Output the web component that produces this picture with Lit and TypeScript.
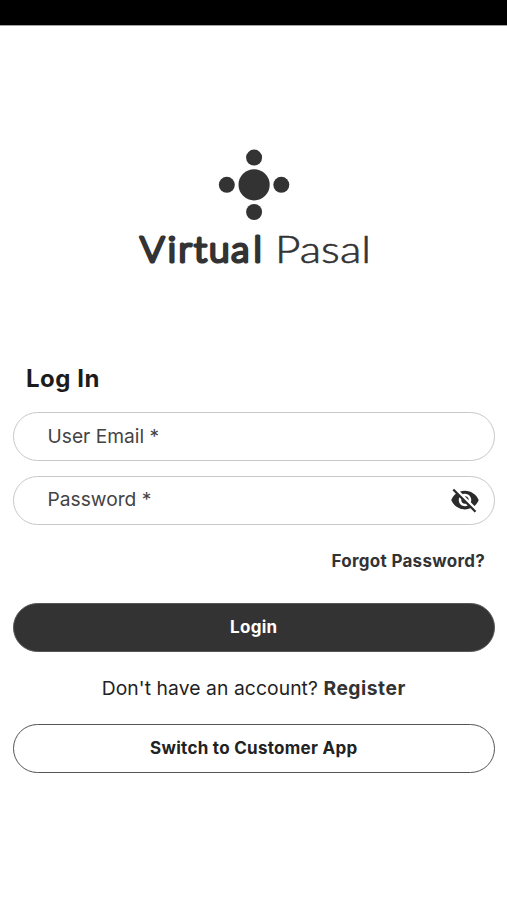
import { LitElement, html, css } from "lit";
import { customElement } from "lit/decorators.js";

@customElement("app-logo")
class AppLogo extends LitElement {
  static styles = css`
    :host { display: block; height: 130px; }
    svg { display: block; }
    .mark { fill: #333; }
    .word { font-family: Lato, sans-serif; fill: #333; stroke: #333; stroke-linejoin: round; }
    .bold { font-size: 34.6px; font-weight: 300; stroke-width: 3.1px; }
    .light { font-size: 37.2px; font-weight: 300; stroke-width: 0.6px; }
  `;
  render() {
    return html`<svg width="240" height="130" viewBox="134 145 240 130" role="img" aria-label="Virtual Pasal">
      <g class="mark">
        <circle cx="254.1" cy="184.8" r="15.6" />
        <circle cx="254.1" cy="157.6" r="8" />
        <circle cx="254.1" cy="212" r="8" />
        <circle cx="226.8" cy="184.8" r="8" />
        <circle cx="281.3" cy="184.8" r="8" />
      </g>
      <text class="word bold" transform="translate(140 261.8) scale(1.08 1)" y="0" x="0 25.6 35.7 50 64 84.6 105.2">Virtual</text>
      <text class="word light" y="263" x="275" textLength="96" lengthAdjust="spacingAndGlyphs">Pasal</text>
    </svg>`;
  }
}

@customElement("app-root")
class AppRoot extends LitElement {
  static styles = css`
    :host {
      display: flex; flex-direction: column; box-sizing: border-box; height: 900px;
      background: #fff; color: #222; font-family: Inter, "Liberation Sans", sans-serif;
    }
    * { box-sizing: border-box; }
    .status { height: 26px; background: #000; border-bottom: 1px solid #a3a3a3; }
    .logo { align-self: center; margin-top: 119px; margin-left: 1px; }
    main { display: flex; flex-direction: column; padding: 0 12.5px 0 13px; margin-top: 85px; }
    h1 { margin: 0 0 0 13px; height: 52px; line-height: 37px; font-size: 24px; font-weight: 650; letter-spacing: 0.5px; color: #1c1c1c; }
    .field {
      display: flex; align-items: center; justify-content: space-between; height: 49px;
      border: 1.3px solid #c8c8c8; border-radius: 25px; padding: 0 14px 2px 33.5px;
      font-size: 19.2px; letter-spacing: 0; color: #444;
    }
    .field + .field { margin-top: 14.5px; }
    .eye { width: 30px; height: 30px; fill: #2b2b2b; margin-top: 2px; }
    .forgot { align-self: flex-end; margin: 24px 9.5px 0 0; line-height: 24px; font-size: 17px; font-weight: 650; letter-spacing: 0.28px; color: #333; }
    .button {
      height: 49px; border: 1.3px solid #555; border-radius: 25px; background: #fff; padding: 0;
      font-family: inherit; font-size: 17px; font-weight: 650; letter-spacing: 0.28px; color: #222;
    }
    .primary { background: #333; color: #fff; margin-top: 30px; }
    .register { height: 72px; line-height: 72px; text-align: center; font-size: 19.3px; letter-spacing: 0.08px; white-space: nowrap; }
    .register b { font-weight: 650; letter-spacing: 0.5px; color: #333; }
  `;
  render() {
    return html`
      <div class="status"></div>
      <app-logo class="logo"></app-logo>
      <main>
        <h1>Log In</h1>
        <div class="field"><span class="label">User Email *</span></div>
        <div class="field">
          <span class="label">Password *</span>
          <svg class="eye" viewBox="0 0 24 24"><path d="M12 7c2.76 0 5 2.24 5 5 0 .65-.13 1.26-.36 1.83l2.92 2.92c1.51-1.26 2.7-2.89 3.43-4.75-1.73-4.39-6-7.5-11-7.5-1.4 0-2.74.25-3.98.7l2.16 2.16C10.74 7.13 11.35 7 12 7zM2 4.27l2.28 2.28.46.46C3.08 8.3 1.78 10.02 1 12c1.73 4.39 6 7.5 11 7.5 1.55 0 3.03-.3 4.38-.84l.42.42L19.73 22 21 20.73 3.27 3 2 4.27zM7.53 9.8l1.55 1.55c-.05.21-.08.43-.08.65 0 1.66 1.34 3 3 3 .22 0 .44-.03.65-.08l1.55 1.55c-.67.33-1.41.53-2.2.53-2.76 0-5-2.24-5-5 0-.79.2-1.53.53-2.2zm4.31-.78l3.15 3.15.02-.16c0-1.66-1.34-3-3-3l-.17.01z"/></svg>
        </div>
        <span class="forgot">Forgot Password?</span>
        <button class="button primary">Login</button>
        <div class="register"><span class="prompt">Don't have an account?</span> <b>Register</b></div>
        <button class="button">Switch to Customer App</button>
      </main>
    `;
  }
}
